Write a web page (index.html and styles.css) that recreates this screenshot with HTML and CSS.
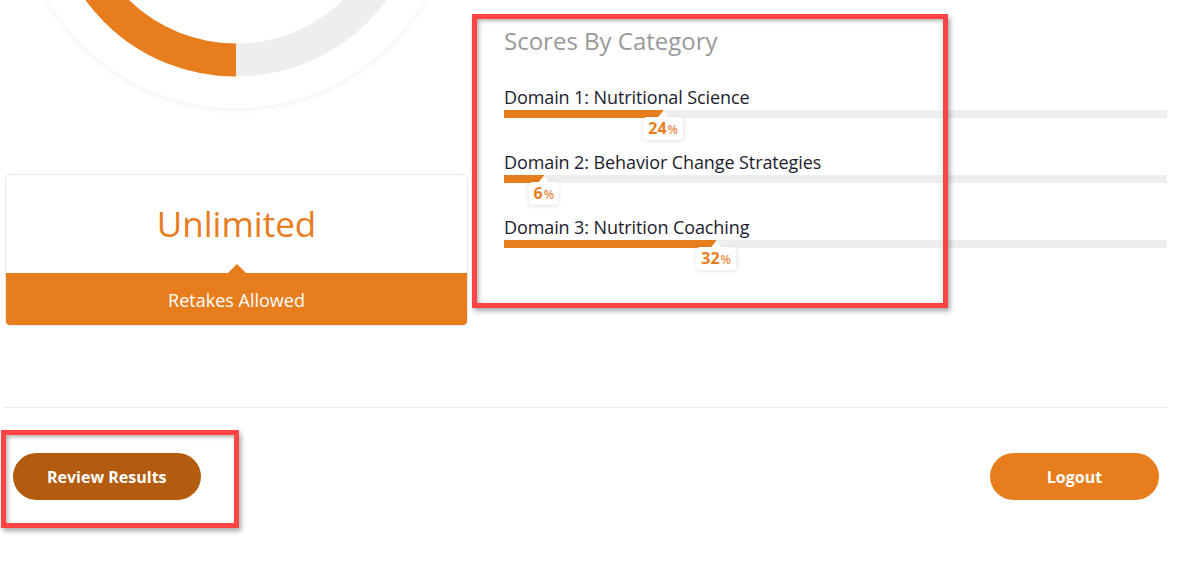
FILE: index.html
```html
<!DOCTYPE html>
<html lang="en">
<head>
<meta charset="utf-8">
<title>Results</title>
<link rel="stylesheet" href="styles.css">
</head>
<body>
<div class="page">
  <div class="top">
    <div class="left">
      <svg class="donut" width="464" height="174" viewBox="0 0 464 174" aria-hidden="true">
        <defs>
          <filter id="soft" x="-20%" y="-20%" width="140%" height="140%">
            <feDropShadow dx="0" dy="1" stdDeviation="3" flood-color="#000" flood-opacity="0.07"/>
          </filter>
        </defs>
        <circle cx="232" cy="-110" r="218" fill="#fff" filter="url(#soft)"/>
        <circle cx="232" cy="-110" r="170" fill="none" stroke="#eeeeee" stroke-width="33"/>
        <path d="M232 60 A170 170 0 0 1 232 -280" fill="none" stroke="#e87d1e" stroke-width="33"/>
      </svg>
      <div class="card">
        <div class="card-value">Unlimited</div>
        <div class="card-label">Retakes Allowed</div>
      </div>
    </div>
    <div class="right">
      <h2 class="title">Scores By Category</h2>
      <div class="cat">
        <div class="cat-label">Domain 1: Nutritional Science</div>
        <div class="bar" style="--p:24%">
          <div class="bar-fill"></div>
          <div class="tip"><b>24</b><small>%</small></div>
        </div>
      </div>
      <div class="cat">
        <div class="cat-label">Domain 2: Behavior Change Strategies</div>
        <div class="bar" style="--p:6%">
          <div class="bar-fill"></div>
          <div class="tip"><b>6</b><small>%</small></div>
        </div>
      </div>
      <div class="cat">
        <div class="cat-label">Domain 3: Nutrition Coaching</div>
        <div class="bar" style="--p:32%">
          <div class="bar-fill"></div>
          <div class="tip"><b>32</b><small>%</small></div>
        </div>
      </div>
    </div>
  </div>
  <div class="divider"></div>
  <div class="actions">
    <button class="btn btn-dark" type="button">Review Results</button>
    <button class="btn btn-orange" type="button">Logout</button>
  </div>
  <div class="mark mark-scores"></div>
  <div class="mark mark-review"></div>
</div>
</body>
</html>
```
FILE: styles.css
```css
* { box-sizing: border-box; }
html, body { margin: 0; padding: 0; background: #fff; }
body {
  font-family: "Open Sans", "Liberation Sans", sans-serif;
  color: #1c1c2e;
  width: 1180px;
  height: 563px;
  overflow: hidden;
}
.page {
  position: relative;
  padding: 0 13px 0 4px;
}
.top {
  display: flex;
}
.left {
  width: 464px;
  flex: none;
}
.donut { display: block; }
.card {
  margin-left: 1px;
  border: 1px solid #e9e9e9;
  border-radius: 5px;
  overflow: hidden;
  height: 152px;
  display: flex;
  flex-direction: column;
}
.card-value {
  flex: 1;
  display: flex;
  align-items: center;
  justify-content: center;
  color: #e87d1e;
  font-size: 35px;
  font-weight: 500;
  padding-bottom: 2px;
}
.card-label {
  position: relative;
  height: 52px;
  background: #e87d1e;
  color: #fff;
  font-size: 18px;
  display: flex;
  align-items: center;
  justify-content: center;
  padding-top: 2px;
}
.card-label::before {
  content: "";
  position: absolute;
  left: 50%;
  top: -9px;
  margin-left: -9px;
  border-left: 9px solid transparent;
  border-right: 9px solid transparent;
  border-bottom: 9px solid #e87d1e;
}
.right {
  flex: 1;
  padding: 25px 0 0 36px;
}
.title {
  margin: 0 0 28px;
  font-size: 24px;
  line-height: 32px;
  font-weight: 400;
  color: #999;
}
.cat {
  margin-bottom: 32px;
}
.cat-label {
  font-size: 18px;
  line-height: 25px;
  color: #1c1c2e;
  letter-spacing: -0.1px;
}
.bar {
  position: relative;
  height: 8px;
  background: #eeeeee;
}
.bar-fill {
  width: var(--p);
  height: 100%;
  background: #e87d1e;
}
.tip {
  position: absolute;
  top: 100%;
  left: var(--p);
  transform: translateX(-50%);
  margin-top: -1px;
  height: 23px;
  padding: 0 5px 1px;
  background: #fff;
  border-radius: 4px;
  box-shadow: 0 1px 4px rgba(0, 0, 0, 0.12);
  display: flex;
  align-items: center;
  white-space: nowrap;
}
.tip::before {
  content: "";
  position: absolute;
  left: 50%;
  top: -6px;
  margin-left: -5px;
  border-left: 5px solid transparent;
  border-right: 5px solid transparent;
  border-bottom: 6px solid #fff;
}
.tip b {
  font-size: 16px;
  font-weight: 700;
  color: #e87d1e;
}
.tip small {
  font-size: 12px;
  font-weight: 600;
  color: #ec8a4a;
  margin-left: 1px;
  padding-top: 3px;
}
.divider {
  margin-top: 81px;
  height: 1px;
  background: #ebebeb;
}
.actions {
  display: flex;
  justify-content: space-between;
  padding: 45px 8px 0 9px;
}
.btn {
  height: 47px;
  min-width: 169px;
  padding: 0 34px;
  border: 0;
  border-radius: 24px;
  color: #fff;
  font-family: "Open Sans", "Liberation Sans", sans-serif;
  font-size: 16px;
  font-weight: 700;
}
.btn-dark { background: #b35c10; }
.btn-orange { background: #e87d1e; }
.mark {
  position: absolute;
  border: 5px solid #ff4444;
  box-shadow: 2px 3px 5px rgba(0, 0, 0, 0.35), inset 2px 2px 4px rgba(0, 0, 0, 0.3);
  pointer-events: none;
}
.mark-scores {
  left: 472px;
  top: 14px;
  width: 476px;
  height: 294px;
}
.mark-review {
  left: 1px;
  top: 430px;
  width: 238px;
  height: 98px;
}
```
